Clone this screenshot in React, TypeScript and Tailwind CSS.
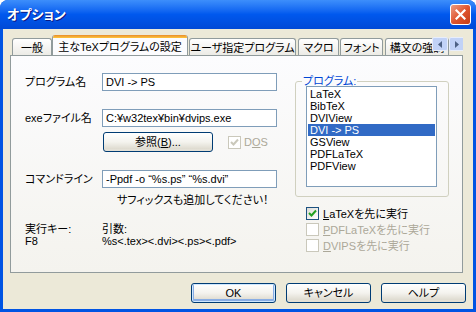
import React from 'react';

// XP-style "オプション" dialog
const font = "font-['Liberation_Sans','Noto_Sans_CJK_JP',sans-serif] [font-feature-settings:'palt']";

const programs = ['LaTeX', 'BibTeX', 'DVIView', 'DVI -> PS', 'GSView', 'PDFLaTeX', 'PDFView'];

function Tab({ label, width, gap }: { label: string; width: string; gap: string }) {
  return (
    <div
      className={`${width} ${gap} h-[17px] shrink-0 rounded-t-[3px] border border-b-0 border-[#919B9C] bg-linear-to-b from-white to-[#ECEBE6] flex items-center justify-center whitespace-nowrap overflow-hidden text-[11px] leading-[12px] pt-px`}
    >
      {label}
    </div>
  );
}

function TextBox({ value }: { value: string }) {
  return (
    <div className="w-[175px] h-[18px] border border-[#7F9DB9] bg-white pl-[3px] flex items-center text-[11px] leading-[12px] whitespace-nowrap">
      {value}
    </div>
  );
}

function XpButton({ children, width, focused }: { children: React.ReactNode; width: string; focused?: boolean }) {
  return (
    <button
      className={`${width} h-[20px] rounded-[3px] border border-[#003C74] bg-linear-to-b from-white via-[#F4F3EE] to-[#D8D4C7] text-[11px] leading-[12px] flex items-center justify-center ${
        focused ? 'shadow-[inset_0_0_0_1px_#CEE7FF,inset_0_-1px_0_2px_#89ADE4]' : 'shadow-[inset_0_-2px_0_0_#E3E0D6]'
      }`}
    >
      {children}
    </button>
  );
}

function CheckBox({ checked, disabled }: { checked?: boolean; disabled?: boolean }) {
  return (
    <div
      className={`w-[13px] h-[13px] shrink-0 border flex items-center justify-center ${
        disabled ? 'border-[#CAC8BB] bg-white' : 'border-[#1C5180] bg-linear-to-br from-[#DCDCD7] to-white'
      }`}
    >
      {checked && (
        <svg width="9" height="9" viewBox="0 0 9 9">
          <path d="M1 4 L3.5 6.5 L8 1.5" fill="none" stroke={disabled ? '#CAC8BB' : '#21A121'} strokeWidth="2" />
        </svg>
      )}
    </div>
  );
}

export default function App() {
  return (
    <div className={`w-[476px] h-[312px] flex flex-col rounded-t-[8px] bg-[#0054E3] overflow-hidden ${font}`}>
      {/* title bar */}
      <div className="h-[29px] shrink-0 flex items-center justify-between pl-[7px] pr-[5px] bg-linear-to-b from-[#3D8EFB] via-[#0058EE] to-[#0049D6]">
        <span className="text-white text-[13px] font-bold leading-[13px] [text-shadow:1px_1px_0_#0A1883]">オプション</span>
        <div className="w-[21px] h-[21px] rounded-[3px] border border-white bg-linear-to-br from-[#E99B83] via-[#E0552F] to-[#C33B16] flex items-center justify-center">
          <svg width="11" height="11" viewBox="0 0 11 11">
            <path d="M1.5 1.5 L9.5 9.5 M9.5 1.5 L1.5 9.5" stroke="white" strokeWidth="2.2" strokeLinecap="square" />
          </svg>
        </div>
      </div>

      {/* client area */}
      <div className="h-[280px] mx-[3px] bg-[#ECE9D8] flex flex-col pt-[6px] pl-[7px] pr-[7px] text-black">
        {/* tab strip */}
        <div className="relative w-[453px] h-[20px] flex items-end overflow-hidden">
          <Tab label="一般" width="w-[40px]" gap="ml-[2px]" />
          <div className="relative z-10 w-[136px] h-[21px] -mb-px shrink-0 rounded-t-[3px] border-x border-[#919B9C] bg-[#FCFCFE] flex flex-col overflow-hidden">
            <div className="h-[3px] bg-linear-to-b from-[#E68B2C] to-[#FFC73C]" />
            <div className="flex-1 flex items-center justify-center text-[11px] leading-[12px] whitespace-nowrap">主なTeXプログラムの設定</div>
          </div>
          <Tab label="ユーザ指定プログラム" width="w-[107px]" gap="ml-px" />
          <Tab label="マクロ" width="w-[41px]" gap="ml-[2px]" />
          <Tab label="フォント" width="w-[43px]" gap="ml-px" />
          <Tab label="構文の強調" width="w-[64px]" gap="ml-[2px]" />
          {/* scroll arrows */}
          <div className="absolute left-[422px] top-[2px] flex gap-px">
            {[0, 1].map((i) => (
              <div key={i} className="w-[16px] h-[14px] rounded-[2px] border border-[#E8EEFB] bg-[#C1D2F7] flex items-center justify-center">
                <svg width="4" height="7" viewBox="0 0 4 7">
                  <path d={i === 0 ? 'M4 0 L0 3.5 L4 7 Z' : 'M0 0 L4 3.5 L0 7 Z'} fill="#4D6185" />
                </svg>
              </div>
            ))}
          </div>
        </div>

        {/* tab panel */}
        <div className="w-[453px] h-[218px] shrink-0 border border-[#919B9C] bg-linear-to-b from-[#FCFCFE] to-[#F4F3EE] flex items-start pt-[17px] pl-[14px] text-[11px] leading-[12px]">
          {/* left column */}
          <div className="w-[252px] flex flex-col">
            <div className="flex items-center h-[18px]">
              <span className="w-[77px]">プログラム名</span>
              <TextBox value="DVI -> PS" />
            </div>
            <div className="flex items-center h-[18px] mt-[18px]">
              <span className="w-[77px]">exeファイル名</span>
              <TextBox value="C:¥w32tex¥bin¥dvips.exe" />
            </div>
            <div className="flex items-center mt-[5px] ml-[78px]">
              <XpButton width="w-[110px]">
                参照(<span className="underline">B</span>)...
              </XpButton>
              <div className="ml-[15px] flex items-center gap-[3px] text-[#ACA899]">
                <CheckBox checked disabled />
                <span>
                  D<span className="underline">O</span>S
                </span>
              </div>
            </div>
            <div className="flex items-center h-[18px] mt-[18px]">
              <span className="w-[77px]">コマンドライン</span>
              <TextBox value={'-Ppdf -o “%s.ps” “%s.dvi”'} />
            </div>
            <div className="mt-[6px] pl-[92px] whitespace-nowrap">サフィックスも追加してください！</div>
            <div className="flex mt-[17px]">
              <div className="w-[77px] flex flex-col">
                <span className="h-[12px]">実行キー:</span>
                <span className="h-[12px]">F8</span>
              </div>
              <div className="flex flex-col">
                <span className="h-[12px]">引数:</span>
                <span className="h-[12px]">%s&lt;.tex&gt;&lt;.dvi&gt;&lt;.ps&gt;&lt;.pdf&gt;</span>
              </div>
            </div>
          </div>

          {/* right column */}
          <div className="ml-[18px] mt-[2px] flex flex-col">
            <fieldset className="w-[154px] h-[122px] border border-[#D0D0BF] rounded-[3px]">
              <legend className="ml-[6px] px-px text-[#0046D5] leading-[12px]">プログラム:</legend>
              <div className="ml-[10px] -mt-px w-[131px] h-[101px] border border-[#7F9DB9] bg-white p-px flex flex-col">
                {programs.map((p) => (
                  <div
                    key={p}
                    className={`h-[12px] shrink-0 pl-[2px] leading-[12px] whitespace-nowrap ${p === 'DVI -> PS' ? 'bg-[#316AC5] text-white' : ''}`}
                  >
                    {p}
                  </div>
                ))}
              </div>
            </fieldset>
            <div className="mt-[10px] ml-[11px] flex flex-col gap-[3px]">
              <div className="flex items-center h-[13px] gap-[4px]">
                <CheckBox checked />
                <span>
                  <span className="underline">L</span>aTeXを先に実行
                </span>
              </div>
              <div className="flex items-center h-[13px] gap-[4px] text-[#ACA899]">
                <CheckBox disabled />
                <span>
                  <span className="underline">P</span>DFLaTeXを先に実行
                </span>
              </div>
              <div className="flex items-center h-[13px] gap-[4px] text-[#ACA899]">
                <CheckBox disabled />
                <span>
                  <span className="underline">D</span>VIPSを先に実行
                </span>
              </div>
            </div>
          </div>
        </div>

        {/* dialog buttons */}
        <div className="mt-[10px] flex justify-end gap-[10px]">
          <XpButton width="w-[85px]" focused>
            OK
          </XpButton>
          <XpButton width="w-[85px]">キャンセル</XpButton>
          <XpButton width="w-[85px]">ヘルプ</XpButton>
        </div>
      </div>
    </div>
  );
}
